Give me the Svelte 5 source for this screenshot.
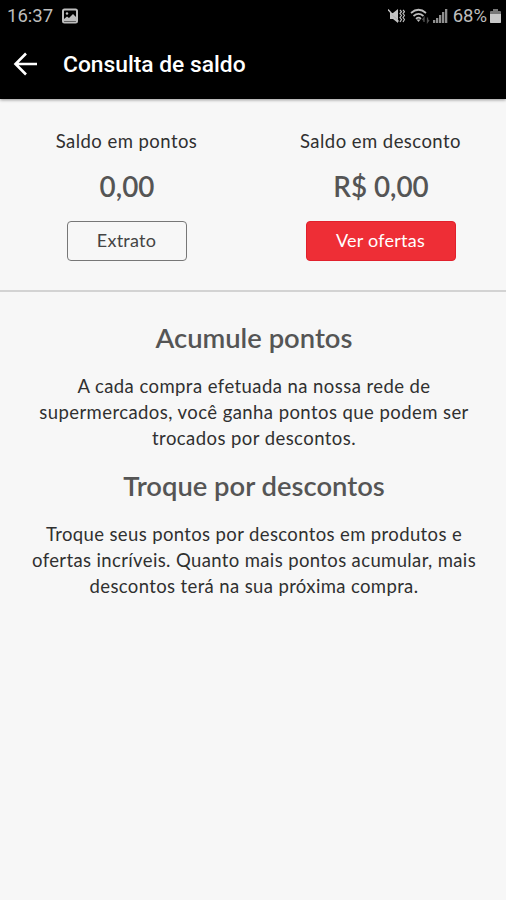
<script>
  const balances = [
    { label: 'Saldo em pontos', value: '0,00', action: 'Extrato', kind: 'outline' },
    { label: 'Saldo em desconto', value: 'R$ 0,00', action: 'Ver ofertas', kind: 'solid' }
  ];
  const sections = [
    {
      title: 'Acumule pontos',
      lines: [
        'A cada compra efetuada na nossa rede de',
        'supermercados, você ganha pontos que podem ser',
        'trocados por descontos.'
      ]
    },
    {
      title: 'Troque por descontos',
      lines: [
        'Troque seus pontos por descontos em produtos e',
        'ofertas incríveis. Quanto mais pontos acumular, mais',
        'descontos terá na sua próxima compra.'
      ]
    }
  ];
</script>

<div class="screen">
  <header>
    <div class="status">
      <span class="time">16:37</span>
      <svg class="photo" width="16" height="16" viewBox="0 0 16 16">
        <rect x="1" y="1.5" width="14" height="13" rx="1.5" fill="none" stroke="#bdbdbd" stroke-width="2" />
        <path d="M2 13V11l3-2.5 2 1.5 4-4 3 3v4z" fill="#bdbdbd" />
        <circle cx="5" cy="5.5" r="1.2" fill="#bdbdbd" />
      </svg>
      <span class="grow"></span>
      <svg class="mute" width="17" height="16" viewBox="0 0 17 16">
        <path d="M2 5h3l5-4v14L5 11H2z" fill="#c4c4c4" />
        <path d="M1 2.500l9.500 11" stroke="#000" stroke-width="1" />
        <path d="M0 1.500l10.500 12" stroke="#c4c4c4" stroke-width="1.400" />
        <path d="M12 2l1.500 1.700L12 5.500l1.500 2L12 9.500l1.500 2L12 14M15 2l1.500 1.700L15 5.500l1.500 2L15 9.500l1.500 2L15 14" fill="none" stroke="#bdbdbd" stroke-width="1.200" />
      </svg>
      <svg class="wifi" width="20" height="16" viewBox="0 0 20 16">
        <g fill="none" stroke="#bdbdbd" stroke-width="1.7">
          <path d="M1 5Q8.500-1.500 16 5M3.500 8Q8.500 3.800 13.500 8M6 10.800Q8.500 8.600 11 10.800" />
        </g>
        <path d="M6.500 11.500h4l-2 2.500z" fill="#bdbdbd" />
        <path d="M14 14v-4l-1.500 2M17.500 9.500v4.500l1.500-2" fill="none" stroke="#505050" stroke-width="1.300" />
      </svg>
      <svg class="signal" width="16" height="16" viewBox="0 0 16 16" fill="#8f8f8f">
        <path d="M1 12h2.300v3H1zM4 10h2.300v5H4zM7 7h2.300v8H7zM10 4h2.300v11H10zM13 1h2.300v14H13z" />
      </svg>
      <span class="percent">68%</span>
      <svg class="battery" width="11" height="14" viewBox="0 0 11 14">
        <path d="M3 0h5v2h2q1 0 1 1v10q0 1-1 1H1q-1 0-1-1V3q0-1 1-1h2z" fill="#777" />
        <path d="M0 5h11v8q0 1-1 1H1q-1 0-1-1z" fill="#c8c8c8" />
      </svg>
    </div>
    <div class="bar">
      <svg width="26" height="26" viewBox="0 0 26 26" fill="none" stroke="#fff" stroke-width="2.6">
        <path d="M24 13H3M13 2.500L2.500 13 13 23.500" />
      </svg>
      <h1>Consulta de saldo</h1>
    </div>
  </header>

  <section class="balances">
    {#each balances as b}
      <div class="balance {b.kind}">
        <span class="label">{b.label}</span>
        <strong>{b.value}</strong>
        <button>{b.action}</button>
      </div>
    {/each}
  </section>

  <main>
    {#each sections as s}
      <h2>{s.title}</h2>
      <p>
        {#each s.lines as line}<span>{line}</span>{/each}
      </p>
    {/each}
  </main>
</div>

<style>
  :global(body) { margin: 0; background: #f7f7f7; }
  .screen {
    height: 900px;
    overflow: hidden;
    background: #f7f7f7;
    color: #303030;
    font-family: Lato, "Noto Sans", sans-serif;
  }
  header {
    height: 99px;
    background: #000;
    box-shadow: 0 1px 3px rgba(0, 0, 0, 0.4);
    font-family: Roboto, sans-serif;
  }
  .status {
    display: flex;
    align-items: center;
    height: 32px;
    padding: 0 5px 0 7px;
    color: #bdbdbd;
    font-size: 18.5px;
  }
  .photo { margin-left: 9px; }
  .grow { flex: 1; }
  .wifi { margin-left: 5px; }
  .signal { margin-left: 2px; }
  .percent { margin-left: 5px; }
  .battery { margin-left: 3px; }
  .bar {
    display: flex;
    align-items: center;
    height: 64px;
    padding-left: 13px;
  }
  h1 {
    margin: 2px 0 0 24px;
    color: #fff;
    font-size: 22.8px;
    font-weight: 500;
    line-height: 30px;
    white-space: nowrap;
  }
  .balances {
    display: flex;
    box-sizing: border-box;
    height: 193px;
    padding: 29px 0 0 1px;
    border-bottom: 2px solid #d3d3d3;
  }
  .balance {
    display: flex;
    flex: 1;
    flex-direction: column;
    align-items: center;
  }
  .solid { padding-left: 3px; }
  .label {
    font-size: 18.5px;
    line-height: 26px;
    letter-spacing: 0.45px;
  }
  strong {
    margin-top: 15px;
    padding-left: 1px;
    color: #555;
    font-size: 27.8px;
    font-weight: 600;
    line-height: 36px;
  }
  button {
    box-sizing: border-box;
    width: 120px;
    height: 40px;
    margin-top: 16px;
    padding: 0 0 2px;
    border: 1px solid #777;
    border-radius: 4px;
    background: transparent;
    color: #444;
    font: 18px/36px Lato, sans-serif;
    letter-spacing: 0.25px;
  }
  .solid button {
    width: 150px;
    border-color: #e1202c;
    background: #ee2e36;
    color: #fff;
  }
  main { padding: 28px 0 0 2px; text-align: center; }
  h2 {
    margin: 0;
    color: #555;
    font-size: 27.4px;
    font-weight: 600;
    line-height: 36px;
  }
  p {
    margin: 17px 0;
    font-size: 18.5px;
    line-height: 26px;
    letter-spacing: 0.43px;
  }
  p:last-child { letter-spacing: 0.37px; }
  p span { display: block; white-space: nowrap; }
</style>
